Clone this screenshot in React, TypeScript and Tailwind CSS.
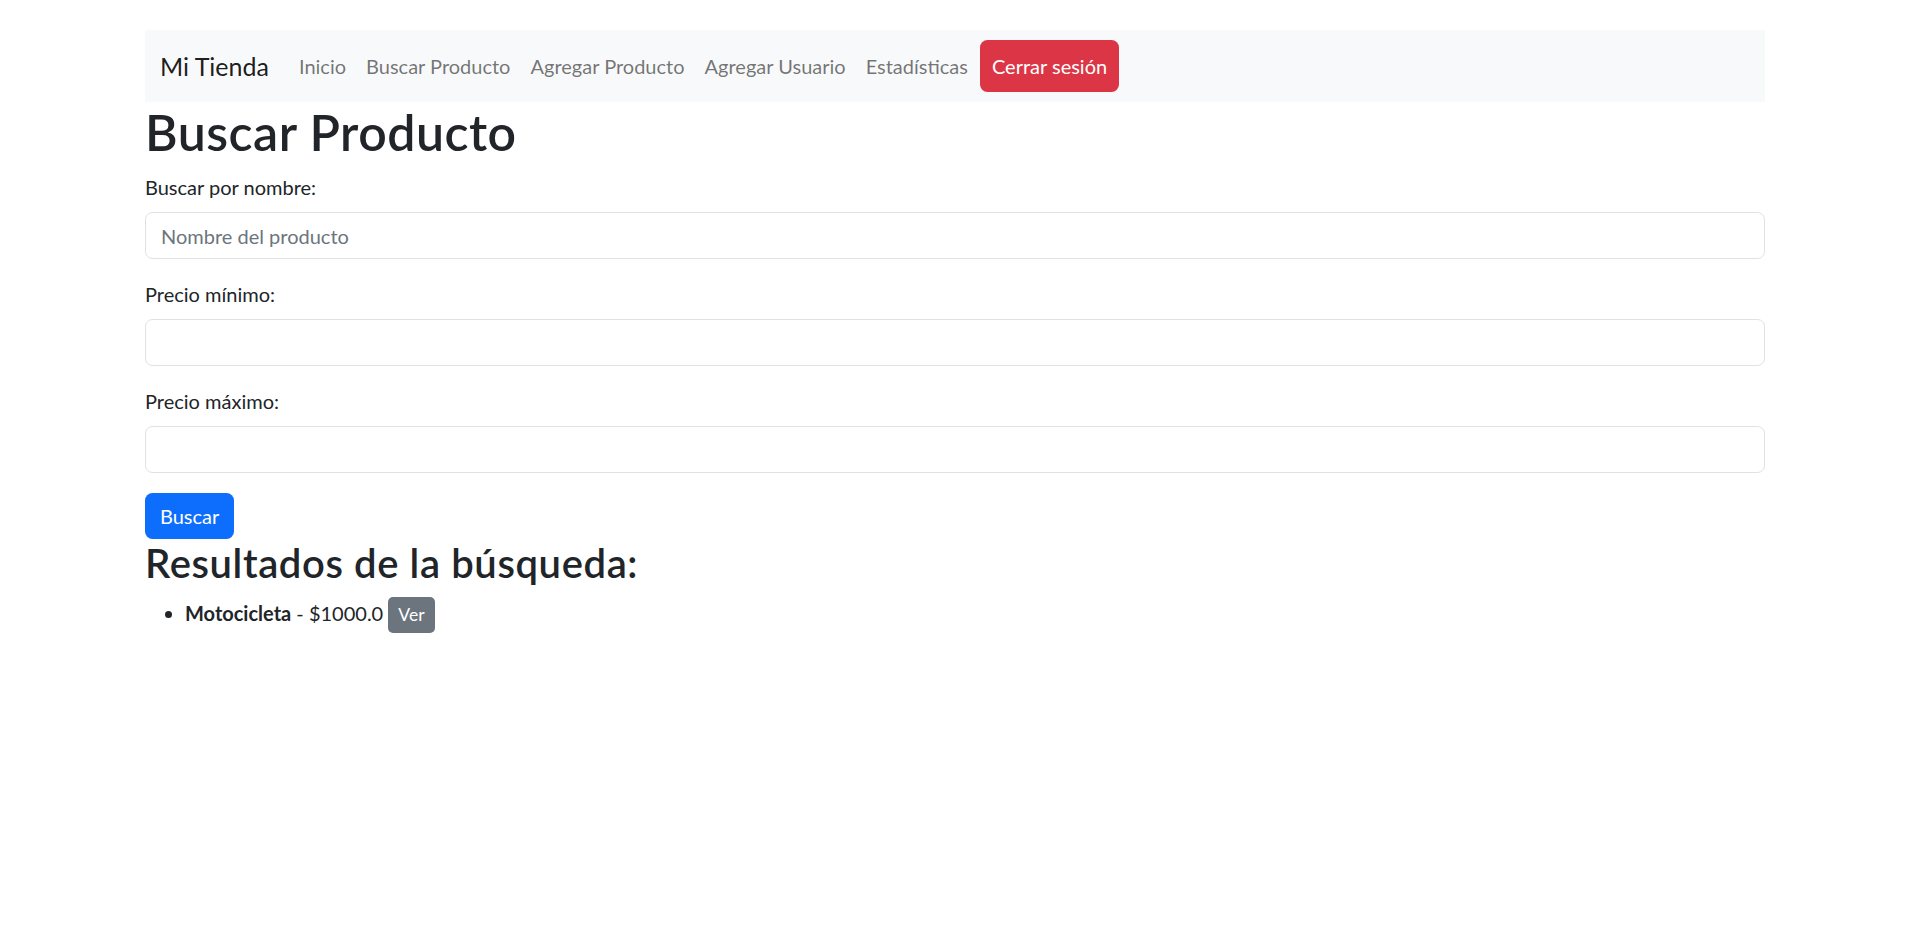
const navLinks = ["Inicio", "Buscar Producto", "Agregar Producto", "Agregar Usuario", "Estadísticas"];

const Field = ({ label, placeholder }: { label: string; placeholder?: string }) => (
  <div className="mb-[20px]">
    <label className="mb-[10px] block text-[20px] leading-[30px]">{label}</label>
    <input
      type="text"
      placeholder={placeholder}
      className="block h-[47px] w-full rounded-[7.5px] border border-[#dee2e6] bg-white px-[15px] text-[20px] leading-[30px] outline-none placeholder:text-[#6c757d]"
    />
  </div>
);

export default function App() {
  return (
    <div className="min-h-screen bg-white text-[#212529]" style={{ fontFamily: 'Lato, "Noto Sans", sans-serif' }}>
      <div className="mx-auto w-[1650px] px-[15px] pt-[30px]">
        {/* navbar */}
        <nav className="flex items-center bg-[#f8f9fa] px-[15px] py-[10px]">
          <span className="mr-[20px] text-[25px] leading-[38px] text-black/90">Mi Tienda</span>
          <ul className="flex items-center">
            {navLinks.map((l) => (
              <li key={l} className="px-[10px] py-[10px] text-[20px] leading-[30px] text-black/55">
                {l}
              </li>
            ))}
            <li>
              <button className="ml-[2px] rounded-[7.5px] bg-[#dc3545] px-[12px] py-[11px] text-[20px] leading-[30px] text-white">
                Cerrar sesión
              </button>
            </li>
          </ul>
        </nav>

        <h1 className="mb-[10px] text-[50px] font-semibold leading-[60px] tracking-[0.01em]">Buscar Producto</h1>

        <form onSubmit={(e) => e.preventDefault()}>
          <Field label="Buscar por nombre:" placeholder="Nombre del producto" />
          <Field label="Precio mínimo:" />
          <Field label="Precio máximo:" />
          <button className="rounded-[7.5px] bg-[#0d6efd] px-[15px] py-[8px] text-[20px] leading-[30px] text-white">
            Buscar
          </button>
        </form>

        <h2 className="mb-[10px] text-[40px] font-semibold leading-[48px] tracking-[0.015em]">Resultados de la búsqueda:</h2>
        <ul className="list-disc pl-[40px] text-[20px] leading-[30px]">
          <li>
            <strong className="font-bold">Motocicleta</strong> - $1000.0{" "}
            <button className="rounded-[5px] bg-[#6c757d] px-[10px] py-[5px] text-[17.5px] leading-[26px] text-white">
              Ver
            </button>
          </li>
        </ul>
      </div>
    </div>
  );
}
